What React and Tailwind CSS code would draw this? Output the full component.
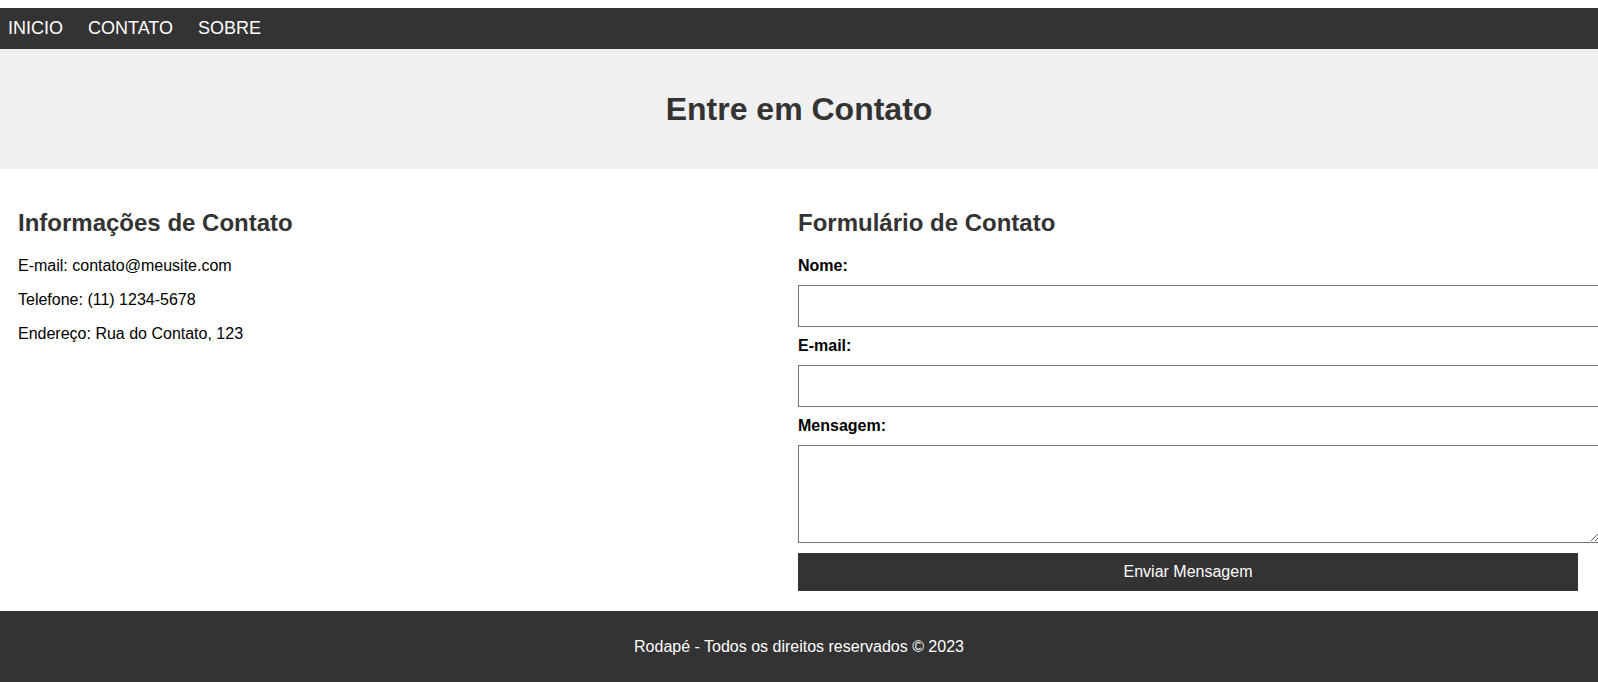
export default function App() {
  const font = { fontFamily: '"Liberation Sans", Arial, sans-serif' };
  return (
    <div className="w-[1598px] overflow-hidden bg-white pt-[8px]" style={font}>
      <nav className="flex h-[41px] items-center gap-[25px] bg-[#333333] pl-[8px] text-[18px] leading-[21px] text-white">
        <a href="#" className="text-white">INICIO</a>
        <a href="#" className="text-white">CONTATO</a>
        <a href="#" className="text-white">SOBRE</a>
      </nav>

      <header className="flex h-[120px] items-center justify-center bg-[#f0f0f0]">
        <h1 className="text-[32px] font-bold leading-[37px] text-[#333333]">Entre em Contato</h1>
      </header>

      <main className="grid grid-cols-2 pb-[20px] pl-[18px] pr-[20px] pt-[20px]">
        <section>
          <h2 className="mb-[20px] mt-[20px] text-[24px] font-bold leading-[28px] text-[#333333]">
            Informações de Contato
          </h2>
          <p className="mb-[16px] text-[16px] leading-[18px] text-black">E-mail: contato@meusite.com</p>
          <p className="mb-[16px] text-[16px] leading-[18px] text-black">Telefone: (11) 1234-5678</p>
          <p className="mb-[16px] text-[16px] leading-[18px] text-black">Endereço: Rua do Contato, 123</p>
        </section>

        <section>
          <h2 className="mb-[20px] mt-[20px] text-[24px] font-bold leading-[28px] text-[#333333]">
            Formulário de Contato
          </h2>
          <form className="flex flex-col" onSubmit={(e) => e.preventDefault()}>
            <label className="mb-[10px] block text-[16px] font-bold leading-[18px] text-black">Nome:</label>
            <input
              type="text"
              className="mb-[10px] block h-[42px] w-[802px] border border-[#767676] bg-white px-[10px] text-[16px]"
            />
            <label className="mb-[10px] block text-[16px] font-bold leading-[18px] text-black">E-mail:</label>
            <input
              type="email"
              className="mb-[10px] block h-[42px] w-[802px] border border-[#767676] bg-white px-[10px] text-[16px]"
            />
            <label className="mb-[10px] block text-[16px] font-bold leading-[18px] text-black">Mensagem:</label>
            <textarea
              className="mb-[10px] block h-[98px] w-[802px] resize border border-[#767676] bg-white p-[10px] text-[16px]"
            />
            <button
              type="submit"
              className="block h-[38px] w-[780px] bg-[#333333] text-[16px] leading-[18px] text-white"
            >
              Enviar Mensagem
            </button>
          </form>
        </section>
      </main>

      <footer className="bg-[#333333] pb-[26px] pt-[27px] text-center text-[16px] leading-[18px] text-white">
        <p>Rodapé - Todos os direitos reservados © 2023</p>
      </footer>
    </div>
  );
}
